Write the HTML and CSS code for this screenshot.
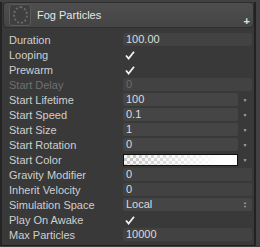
FILE: index.html
```html
<!DOCTYPE html>
<html lang="en">

<head>
  <meta charset="UTF-8">
  <title>Fog Particles</title>
  <link rel="stylesheet" href="styles.css">
</head>

<body>
  <div class="inspector">
    <header class="module-header">
      <div class="module-icon"><span class="ring"></span></div>
      <span class="module-title">Fog Particles</span>
      <span class="add">+</span>
    </header>

    <div class="rows">
      <div class="row">
        <span class="label">Duration</span>
        <div class="field">100.00</div>
      </div>
      <div class="row">
        <span class="label">Looping</span>
        <div class="check"><svg width="10" height="9" viewBox="0 0 10 9"><path d="M1 4.5 L3.6 7.5 L9 0.8" fill="none" stroke="#f2f2f2" stroke-width="1.8"/></svg></div>
      </div>
      <div class="row">
        <span class="label">Prewarm</span>
        <div class="check"><svg width="10" height="9" viewBox="0 0 10 9"><path d="M1 4.5 L3.6 7.5 L9 0.8" fill="none" stroke="#f2f2f2" stroke-width="1.8"/></svg></div>
      </div>
      <div class="row disabled">
        <span class="label">Start Delay</span>
        <div class="field">0</div>
      </div>
      <div class="row">
        <span class="label">Start Lifetime</span>
        <div class="popup"><div class="box">100</div><span class="arrow">&#9660;</span></div>
      </div>
      <div class="row">
        <span class="label">Start Speed</span>
        <div class="popup"><div class="box">0.1</div><span class="arrow">&#9660;</span></div>
      </div>
      <div class="row">
        <span class="label">Start Size</span>
        <div class="popup"><div class="box">1</div><span class="arrow">&#9660;</span></div>
      </div>
      <div class="row">
        <span class="label">Start Rotation</span>
        <div class="popup"><div class="box">0</div><span class="arrow">&#9660;</span></div>
      </div>
      <div class="row">
        <span class="label">Start Color</span>
        <div class="popup"><div class="gradient"></div><span class="arrow">&#9660;</span></div>
      </div>
      <div class="row">
        <span class="label">Gravity Modifier</span>
        <div class="field">0</div>
      </div>
      <div class="row">
        <span class="label">Inherit Velocity</span>
        <div class="field">0</div>
      </div>
      <div class="row">
        <span class="label">Simulation Space</span>
        <div class="field select"><span>Local</span><span class="updown">&#9650;<br>&#9660;</span></div>
      </div>
      <div class="row">
        <span class="label">Play On Awake</span>
        <div class="check"><svg width="10" height="9" viewBox="0 0 10 9"><path d="M1 4.5 L3.6 7.5 L9 0.8" fill="none" stroke="#f2f2f2" stroke-width="1.8"/></svg></div>
      </div>
      <div class="row">
        <span class="label">Max Particles</span>
        <div class="field">10000</div>
      </div>
    </div>
  </div>
</body>

</html>
```

FILE: styles.css
```css
:root {
  font-family: 'Liberation Sans', Arial, sans-serif;
  font-size: 11px;
}

body {
  background-color: #414141;
  color: #cfcfcf;
  margin: 0;
  padding: 0;
}

.inspector {
  box-sizing: border-box;
  width: 256px;
  height: 244px;
  background-color: #393939;
  border-left: 2px solid #242424;
  border-right: 2px solid #222;
  border-bottom: 1px solid #1e1e1e;
}

.module-header {
  position: relative;
  box-sizing: border-box;
  height: 26px;
  margin: 2px 0 0 1px;
  padding-left: 5px;
  display: flex;
  align-items: center;
  background: linear-gradient(#4e4e4e, #454545);
  border: 1px solid #2e2e2e;
  border-radius: 4px;
}

.module-icon {
  box-sizing: border-box;
  width: 22px;
  height: 22px;
  display: flex;
  align-items: center;
  justify-content: center;
  background-color: #3f3f3f;
  border: 1px solid #5a5a5a;
  border-radius: 3px;
}

.module-icon .ring {
  width: 11px;
  height: 14px;
  border: 2px dotted #6a6a6a;
  border-radius: 50%;
}

.module-title {
  margin-left: 6px;
  color: #e6e6e6;
}

.add {
  position: absolute;
  right: 3px;
  bottom: 0;
  font-weight: 700;
  font-size: 11px;
  color: #e0e0e0;
}

.rows {
  padding-top: 4px;
}

.row {
  height: 15px;
  display: flex;
  align-items: center;
  padding-left: 7px;
}

.label {
  width: 114px;
  flex-shrink: 0;
}

.disabled {
  color: #707070;
}

.field {
  box-sizing: border-box;
  flex: 1;
  height: 13px;
  margin-right: 2px;
  padding-left: 3px;
  line-height: 13px;
  background-color: #424242;
  border-radius: 2px;
  color: #dcdcdc;
}

.disabled .field {
  color: #6c6c6c;
}

.field.select {
  display: flex;
  justify-content: space-between;
  align-items: center;
  background-color: #454545;
}

.updown {
  font-size: 4px;
  line-height: 4px;
  margin-right: 5px;
  color: #a0a0a0;
}

.check {
  padding-left: 2px;
  height: 9px;
}

.popup {
  flex: 1;
  display: flex;
  align-items: center;
  margin-right: 2px;
}

.popup .box {
  box-sizing: border-box;
  width: 115px;
  height: 13px;
  padding-left: 3px;
  line-height: 13px;
  background-color: #454545;
  border-radius: 2px;
  color: #dcdcdc;
}

.popup .arrow {
  flex: 1;
  text-align: center;
  font-size: 5px;
  color: #a8a8a8;
}

.gradient {
  box-sizing: border-box;
  width: 115px;
  height: 12px;
  border: 1px solid #111;
  background:
    linear-gradient(to right, rgba(255, 255, 255, 0), #fff 85%),
    repeating-conic-gradient(#c4c4c4 0 25%, #f4f4f4 0 50%) 0 0 / 6px 6px;
}
```
